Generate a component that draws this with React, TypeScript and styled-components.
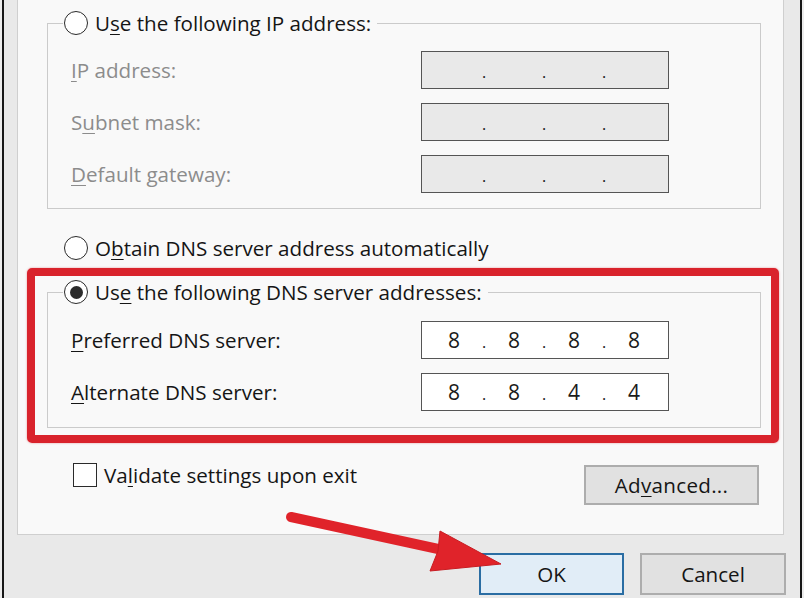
import React from "react";
import styled, { createGlobalStyle } from "styled-components";

const Global = createGlobalStyle`
  html, body { margin: 0; padding: 0; background: #ececec; }
  body { font-family: "Open Sans", "Noto Sans", sans-serif; }
`;

const FONT = `"Open Sans", "Noto Sans", sans-serif`;
const TEXT = "20.6px";

const Root = styled.div`
  position: relative;
  width: 804px;
  height: 598px;
  overflow: hidden;
  background: #ececec;
  font-family: ${FONT};
`;

const Window = styled.div`
  margin-left: 2px;
  width: 800px;
  height: 598px;
  box-sizing: border-box;
  border-left: 2px solid #161616;
  border-right: 2px solid #161616;
  background: #e9e9e9;
  display: flex;
  flex-direction: column;
`;

const PanelWrap = styled.div`
  padding: 0 16px 0 13px;
`;

const Panel = styled.div`
  background: #f9f9f9;
  border: 1px solid #cfcfcf;
  border-top: none;
  padding: 11px 22px 29px 29px;
  display: flex;
  flex-direction: column;
`;

const Group = styled.fieldset<{ $pt: number; $pb: number }>`
  margin: 0;
  border: 1px solid #cbcbcb;
  padding: ${(p) => `${p.$pt}px 0 ${p.$pb}px 0`};
  display: flex;
  flex-direction: column;
  gap: 14px;
  min-inline-size: 0;
`;

const Legend = styled.legend`
  margin-left: 15px;
  padding: 0 6px 0 1px;
  height: 24px;
  display: flex;
  align-items: center;
  gap: 7px;
  font-size: ${TEXT};
  color: #151515;
`;

const Radio = styled.span<{ $on?: boolean }>`
  width: 24px;
  height: 24px;
  box-sizing: border-box;
  border: 1.6px solid #2a2a2a;
  border-radius: 50%;
  background: #fff;
  display: flex;
  align-items: center;
  justify-content: center;
  flex: none;
  &::after {
    content: "";
    display: ${(p) => (p.$on ? "block" : "none")};
    width: 13px;
    height: 13px;
    border-radius: 50%;
    background: #2b2b2b;
  }
`;

const OptionRow = styled.div`
  margin: 27px 0 0 17px;
  height: 24px;
  display: flex;
  align-items: center;
  gap: 7px;
  font-size: ${TEXT};
  color: #151515;
`;

const Field = styled.div`
  display: flex;
  align-items: center;
  padding-left: 23px;
`;

const Label = styled.span<{ $dis?: boolean }>`
  width: 350px;
  font-size: ${TEXT};
  color: ${(p) => (p.$dis ? "#8c8c8c" : "#151515")};
`;

const IpBox = styled.div<{ $dis?: boolean }>`
  width: 248px;
  height: 38px;
  box-sizing: border-box;
  border: 1.5px solid #555;
  background: ${(p) => (p.$dis ? "#e9e9e9" : "#ffffff")};
  padding-left: 10px;
  display: flex;
  align-items: center;
  font-size: 21px;
  color: #1a1a1a;
`;

const Octet = styled.span`
  width: 44px;
  text-align: center;
`;

const Dot = styled.span`
  width: 16px;
  text-align: center;
  font-size: 16px;
  padding-top: 4px;
`;

const Highlight = styled.div`
  margin: 8px -18px 0 -20px;
  border: 8px solid #d9232c;
  border-radius: 5px;
  padding: 4px 10px 7px 12px;
  box-shadow: 0 0 2px rgba(217, 35, 44, 0.5);
`;

const BottomRow = styled.div`
  margin-top: 20px;
  display: flex;
  justify-content: space-between;
  align-items: flex-start;
`;

const CheckRow = styled.label`
  margin-left: 26px;
  display: flex;
  align-items: center;
  gap: 7px;
  font-size: ${TEXT};
  color: #151515;
  height: 24px;
`;

const Check = styled.span`
  width: 24px;
  height: 24px;
  box-sizing: border-box;
  border: 1.6px solid #2a2a2a;
  background: #fff;
  flex: none;
`;

const Button = styled.div<{ $w: number; $h: number; $primary?: boolean }>`
  width: ${(p) => p.$w}px;
  height: ${(p) => p.$h}px;
  box-sizing: border-box;
  border: 2px solid ${(p) => (p.$primary ? "#2a6da3" : "#adadad")};
  background: ${(p) => (p.$primary ? "#e1edf7" : "#e1e1e1")};
  display: flex;
  align-items: center;
  justify-content: center;
  font-size: ${TEXT};
  color: #151515;
`;

const AdvButton = styled(Button)`
  margin-top: 2px;
  margin-right: 2px;
  letter-spacing: 0.3px;
`;

const Footer = styled.div`
  flex: 1;
  display: flex;
  justify-content: flex-end;
  gap: 16px;
  padding: 18px 14px 0 0;
`;

const Arrow = styled.svg`
  position: absolute;
  left: 0;
  top: 0;
  pointer-events: none;
`;

const U = styled.span`
  text-decoration: underline;
  text-underline-offset: 3px;
  text-decoration-thickness: 1px;
`;

const Ip = ({ parts, dis }: { parts: string[]; dis?: boolean }) => (
  <IpBox $dis={dis}>
    <Octet>{parts[0]}</Octet>
    <Dot>.</Dot>
    <Octet>{parts[1]}</Octet>
    <Dot>.</Dot>
    <Octet>{parts[2]}</Octet>
    <Dot>.</Dot>
    <Octet>{parts[3]}</Octet>
  </IpBox>
);

export default function App() {
  const empty = ["", "", "", ""];
  return (
    <Root>
      <Global />
      <Window>
        <PanelWrap>
          <Panel>
            <Group $pt={16} $pb={15}>
              <Legend>
                <Radio />
                <span>
                  U<U>s</U>e the following IP address:
                </span>
              </Legend>
              <Field>
                <Label $dis>
                  <U>I</U>P address:
                </Label>
                <Ip parts={empty} dis />
              </Field>
              <Field>
                <Label $dis>
                  S<U>u</U>bnet mask:
                </Label>
                <Ip parts={empty} dis />
              </Field>
              <Field>
                <Label $dis>
                  <U>D</U>efault gateway:
                </Label>
                <Ip parts={empty} dis />
              </Field>
            </Group>

            <OptionRow>
              <Radio />
              <span>
                O<U>b</U>tain DNS server address automatically
              </span>
            </OptionRow>

            <Highlight>
              <Group $pt={17} $pb={16}>
                <Legend>
                  <Radio $on />
                  <span>
                    Us<U>e</U> the following DNS server addresses:
                  </span>
                </Legend>
                <Field>
                  <Label>
                    <U>P</U>referred DNS server:
                  </Label>
                  <Ip parts={["8", "8", "8", "8"]} />
                </Field>
                <Field>
                  <Label>
                    <U>A</U>lternate DNS server:
                  </Label>
                  <Ip parts={["8", "8", "4", "4"]} />
                </Field>
              </Group>
            </Highlight>

            <BottomRow>
              <CheckRow>
                <Check />
                <span>
                  Va<U>l</U>idate settings upon exit
                </span>
              </CheckRow>
              <AdvButton $w={175} $h={40}>
                <span>
                  Ad<U>v</U>anced...
                </span>
              </AdvButton>
            </BottomRow>
          </Panel>
        </PanelWrap>
        <Footer>
          <Button $w={145} $h={42} $primary>
            OK
          </Button>
          <Button $w={146} $h={42}>
            Cancel
          </Button>
        </Footer>
      </Window>
      <Arrow width="804" height="598" viewBox="0 0 804 598">
        <line
          x1="291"
          y1="517"
          x2="452"
          y2="552"
          stroke="#e0232a"
          strokeWidth="10"
          strokeLinecap="round"
        />
        <path d="M440 531 L501 564 L430 571 L438 551 Z" fill="#e0232a" stroke="#c81c22" strokeWidth="1" strokeLinejoin="round" />
      </Arrow>
    </Root>
  );
}
